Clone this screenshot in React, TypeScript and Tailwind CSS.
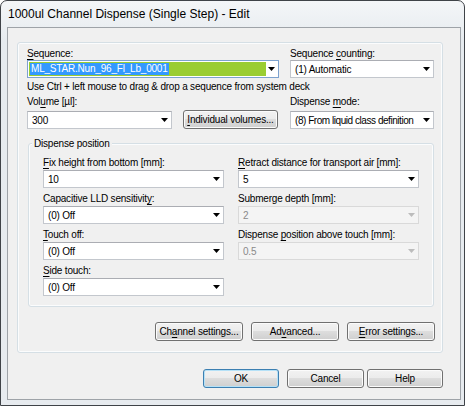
import type { ReactNode } from 'react';

function Mn({ before = '', u, after = '' }: { before?: string; u: string; after?: string }) {
  return (
    <>
      {before}
      <span className="underline underline-offset-[2px]">{u}</span>
      {after}
    </>
  );
}

function Arrow({ disabled }: { disabled?: boolean }) {
  return (
    <svg width="7" height="4" viewBox="0 0 7 4" className="mr-[3px] shrink-0">
      <polygon points="0,0 7,0 3.5,4" fill={disabled ? '#bcbcbc' : '#000'} />
    </svg>
  );
}

function Combo({ value, disabled, textClass = '' }: { value: string; disabled?: boolean; textClass?: string }) {
  const look = disabled
    ? 'border-[#d9d9d9] bg-[#f4f4f4] text-[#8a8a8a]'
    : 'border-[#c3c7cd] border-t-[#abadb3] bg-white text-black';
  return (
    <div className={`flex h-[18px] items-center border ${look}`}>
      <span className={`flex-1 truncate pl-[4px] leading-[13px] ${textClass}`}>{value}</span>
      <Arrow disabled={disabled} />
    </div>
  );
}

function Btn({ children, primary, className = '' }: { children: ReactNode; primary?: boolean; className?: string }) {
  const edge = primary
    ? 'border-[#3c7fb1] shadow-[inset_0_0_0_1px_#b5e1f7]'
    : 'border-[#707070] shadow-[inset_0_0_0_1px_#fbfbfb]';
  return (
    <div
      className={`flex h-[19px] items-center justify-center whitespace-nowrap rounded-[3px] border bg-[linear-gradient(#f2f2f2,#ebebeb_50%,#dddddd_50%,#cfcfcf)] leading-[13px] ${edge} ${className}`}
    >
      {children}
    </div>
  );
}

function Field({ label, value, disabled }: { label: ReactNode; value: string; disabled?: boolean }) {
  return (
    <div className="flex w-[181px] flex-col">
      <div className="h-[14px] whitespace-nowrap leading-[13px]">{label}</div>
      <Combo value={value} disabled={disabled} />
    </div>
  );
}

export default function App() {
  return (
    <div className="h-[406px] w-[466px] bg-white font-['Liberation_Sans',Arial,sans-serif] text-[10px] tracking-[-0.2px] text-black">
      <div className="flex h-[406px] w-[465px] flex-col rounded-t-[7px] border border-[#3f4348] bg-[linear-gradient(#f4f6f8,#e6ebef_40px,#e7ebef)]">
        {/* title bar */}
        <div className="flex h-[26px] shrink-0 items-center pl-[7px] text-[12px] leading-[14px] tracking-normal text-black">
          1000ul Channel Dispense (Single Step) - Edit
        </div>

        {/* client area */}
        <div className="ml-[6px] mr-[3px] h-[373px] border border-[#9ea3a8] bg-[#f0f0f0]">
          {/* main group */}
          <div className="ml-[9px] mt-[14px] flex h-[311px] w-[426px] flex-col rounded-[3px] border border-[#d5dfe5] shadow-[inset_0_0_0_1px_#fbfcfd]">
            <div className="flex pl-[9px] pt-[4px]">
              <div className="flex w-[252px] flex-col">
                <div className="h-[13px] leading-[13px]">
                  <Mn u="S" after="equence:" />
                </div>
                <div className="flex h-[18px] items-center border border-[#7da2ce] bg-white">
                  <div className="ml-[1px] flex h-[14px] flex-1 items-center bg-[#9acd32]">
                    <span className="ml-[1px] bg-[#3399ff] px-[1px] leading-[12px] text-white">ML_STAR.Nun_96_Fl_Lb_0001</span>
                  </div>
                  <div className="ml-[1px] flex w-[11px] justify-end">
                    <Arrow />
                  </div>
                </div>
              </div>
              <div className="ml-[11px] flex w-[144px] flex-col">
                <div className="h-[13px] leading-[13px]">
                  <Mn before="Sequence " u="c" after="ounting:" />
                </div>
                <Combo value="(1) Automatic" />
              </div>
            </div>

            <div className="mt-[2px] h-[13px] pl-[9px] leading-[13px]">
              Use Ctrl + left mouse to drag &amp; drop a sequence from system deck
            </div>

            <div className="mt-[2px] flex pl-[9px]">
              <div className="flex w-[145px] flex-col">
                <div className="h-[16px] leading-[13px]">
                  <Mn before="Vol" u="u" after="me [µl]:" />
                </div>
                <Combo value="300" />
              </div>
              <div className="ml-[11px] flex flex-col justify-end">
                <Btn className="w-[95px]">
                  <Mn u="I" after="ndividual volumes..." />
                </Btn>
              </div>
              <div className="ml-[12px] flex w-[144px] flex-col">
                <div className="h-[16px] leading-[13px]">
                  <Mn before="Dispense " u="m" after="ode:" />
                </div>
                <Combo value="(8) From liquid class definition" textClass="tracking-[-0.45px]" />
              </div>
            </div>

            {/* dispense position group */}
            <div className="relative ml-[10px] mt-[14px] h-[164px] w-[406px] rounded-[3px] border border-[#d5dfe5] shadow-[inset_0_0_0_1px_#fbfcfd]">
              <span className="absolute left-[3px] top-[-7px] bg-[#f0f0f0] px-[2px] leading-[13px]">Dispense position</span>
              <div className="flex gap-[14px] pl-[14px] pt-[12px]">
                <div className="flex flex-col gap-[4px]">
                  <Field label={<Mn u="F" after="ix height from bottom [mm]:" />} value="10" />
                  <Field label={<Mn before="Capacitive LLD sensitivit" u="y" after=":" />} value="(0) Off" />
                  <Field label={<Mn u="T" after="ouch off:" />} value="(0) Off" />
                  <Field label={<Mn u="S" after="ide touch:" />} value="(0) Off" />
                </div>
                <div className="flex flex-col gap-[4px]">
                  <Field label={<Mn u="R" after="etract distance for transport air [mm]:" />} value="5" />
                  <Field label="Submerge depth [mm]:" value="2" disabled />
                  <Field label={<Mn before="Dispense " u="p" after="osition above touch [mm]:" />} value="0.5" disabled />
                </div>
              </div>
            </div>

            <div className="mt-[15px] flex justify-end gap-[8px] pr-[7px]">
              <Btn className="w-[88px]">
                <Mn before="Ch" u="a" after="nnel settings..." />
              </Btn>
              <Btn className="w-[88px]">
                <Mn before="Ad" u="v" after="anced..." />
              </Btn>
              <Btn className="w-[88px]">
                <Mn u="E" after="rror settings..." />
              </Btn>
            </div>
          </div>

          <div className="mt-[16px] flex justify-end pr-[17px]">
            <Btn primary className="w-[76px]">OK</Btn>
            <Btn className="ml-[8px] w-[77px]">Cancel</Btn>
            <Btn className="ml-[3px] w-[76px]">Help</Btn>
          </div>
        </div>
      </div>
    </div>
  );
}
